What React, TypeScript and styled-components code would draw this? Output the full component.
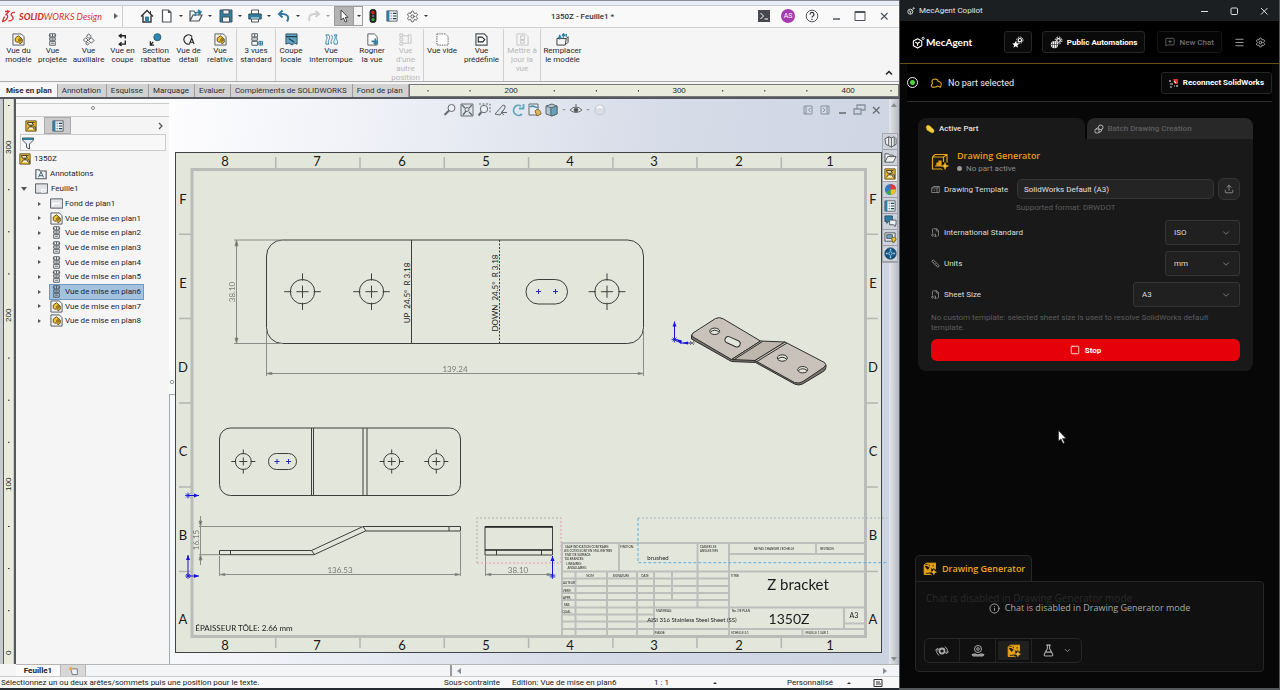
import React from "react";
import styled, { createGlobalStyle, css } from "styled-components";
import { Settings, MessageSquarePlus, Menu, Upload, ChevronDown, Info, FlaskConical, Ruler, Link2, Square, FileDigit } from "lucide-react";

const GlobalStyle = createGlobalStyle`
  * { box-sizing: border-box; }
  body { margin: 0; background: #000; font-family: Roboto, "Open Sans", sans-serif; font-size: 8px; color: #222; }
  button, input, select, textarea { font: inherit; color: inherit; margin: 0; padding: 0; }
  ul { list-style: none; margin: 0; padding: 0; }
  svg { flex: none; }
`;

/* ---------- shell ---------- */

const Desktop = styled.div`
  display: grid;
  grid-template-columns: minmax(0, 1fr) 381px;
  min-height: 100vh;
`;
const CadWindow = styled.main`
  display: flex;
  flex-direction: column;
  min-width: 0;
  background: #f5f5f5;
  border-top: 1px solid #8c8f96;
  border-bottom: 2px solid #262a31;
`;
const Icon = styled.svg<{ $s?: number }>`
  width: ${(p) => p.$s ?? 14}px;
  height: ${(p) => p.$s ?? 14}px;
  display: block;
  fill: none;
  stroke: #50555b;
  stroke-width: 1;
`;
const PlainButton = styled.button`
  border: 0;
  background: none;
  display: flex;
  align-items: center;
  justify-content: center;
`;

/* ---------- title bar ---------- */

const TitleBar = styled.header`
  display: flex;
  align-items: stretch;
  height: 27px;
  padding-top: 4px;
  background: linear-gradient(#e9eef6 0 4px, #c9ccd3 4px 5px, #f9f9f9 5px);
  border-bottom: 1px solid #d0d0d0;
`;
const Brand = styled.div`
  display: flex;
  align-items: center;
  width: 123px;
  gap: 3px;
  padding-left: 2px;
  color: #d4332f;
  font: italic 9px Lato, sans-serif;
  border-right: 1px solid #cfcfcf;
  b { font-weight: 900; }
  span { white-space: nowrap; }
`;
const BrandArrow = styled.svg`
  width: 4px;
  height: 6px;
  margin: 0 4px 0 auto;
  fill: #666;
`;
const QuickTools = styled.nav`
  display: flex;
  align-items: center;
  padding-left: 17px;
`;
const QuickButton = styled(PlainButton)<{ $w: number; $active?: boolean }>`
  width: ${(p) => p.$w}px;
  height: 20px;
  justify-content: flex-start;
  gap: 5px;
  ${(p) => p.$active && css`
    border: 1px solid #9b9b9b;
    gap: 6px;
    padding-left: 2px;
    margin-right: 3px;
    background: linear-gradient(90deg, #b3b3b3 0 18px, #999 18px 19px, #f5f5f5 19px);
  `}
`;
const Caret = styled.i<{ $dim?: boolean }>`
  border: 2px solid transparent;
  border-top-color: ${(p) => (p.$dim ? "#999" : "#333")};
  border-bottom: 0;
`;
const DocTitle = styled.h1`
  flex: 1;
  margin: 0;
  padding-right: 26px;
  text-align: center;
  align-self: center;
  font-size: 8px;
  font-weight: 500;
  color: #333;
`;
const WindowTools = styled.div`
  display: flex;
  align-items: center;
  gap: 10px;
  padding-right: 8px;
`;
const Avatar = styled.span`
  width: 14px;
  height: 14px;
  border-radius: 50%;
  background: #a63ab0;
  color: #fff;
  font-size: 7px;
  line-height: 14px;
  text-align: center;
`;

/* ---------- ribbon ---------- */

const Ribbon = styled.div`
  display: flex;
  height: 54px;
  padding: 1px 0 0 2px;
  border-bottom: 1px solid #aaa;
`;
const RibbonGroup = styled.div`
  display: flex;
  & + & { border-left: 1px solid #cfcfcf; }
`;
const RibbonButton = styled.button<{ $w: number }>`
  display: flex;
  flex-direction: column;
  align-items: center;
  width: ${(p) => p.$w}px;
  padding-top: 4px;
  border: 0;
  background: none;
  color: #262a33;
  line-height: 9px;
  white-space: nowrap;
  &:disabled { color: #b9b9b9; }
`;
const Collapse = styled(PlainButton)`
  margin: auto 5px 3px auto;
`;
const TabStrip = styled.div`
  display: flex;
  height: 17px;
  padding-top: 2px;
  border-bottom: 2px solid #55585e;
`;
const RibbonTab = styled.button<{ $active?: boolean }>`
  padding: 0 5px 0 ${(p) => (p.$active ? 6 : 4)}px;
  border: solid #9c9c9c;
  border-width: 0 1px 0 0;
  background: ${(p) => (p.$active ? "#f7f7f7" : "#d2d2d2")};
  color: #2a2d34;
  font-weight: ${(p) => (p.$active ? 700 : 400)};
  white-space: nowrap;
`;
const TopRuler = styled.svg`
  flex: 1;
  min-width: 0;
  height: 13px;
  background: #e9ecdd;
  outline: 1px solid #777;
  outline-offset: -1px;
  font: 8px "Liberation Sans", sans-serif;
  fill: #222;
`;

/* ---------- body ---------- */

const Workspace = styled.div`
  display: flex;
  flex: 1;
  min-height: 0;
`;
const SideRuler = styled.svg`
  width: 16px;
  height: 565px;
  font: 8px "Liberation Sans", sans-serif;
  fill: #222;
`;
const WorkColumn = styled.div`
  display: flex;
  flex-direction: column;
  flex: 1;
  min-width: 0;
`;
const ViewRow = styled.div`
  display: flex;
  flex: 1;
`;
const TreePane = styled.aside`
  width: 153px;
  flex: none;
  background: #f5f5f5;
`;
const Grip = styled.div`
  height: 18px;
  border-bottom: 1px solid #ccc;
  display: grid;
  place-items: center;
  background: linear-gradient(#fafafa 0 4px, #ccc 4px 5px, #f7f7f7 5px);
`;
const Knob = styled.i`
  width: 4px;
  height: 4px;
  border: 1px solid #888;
  border-radius: 50%;
`;
const PaneTabs = styled.div`
  display: flex;
  align-items: center;
  height: 17px;
  padding: 0 4px 0 1px;
`;
const PaneTab = styled(PlainButton)<{ $active?: boolean }>`
  width: 27px;
  height: 17px;
  background: ${(p) => (p.$active ? "#cbcbcd" : "transparent")};
  border: ${(p) => (p.$active ? "1px solid #aaa" : "0")};
`;
const PaneMore = styled(PlainButton)`
  margin-left: auto;
`;
const FilterBox = styled.label`
  display: flex;
  align-items: center;
  height: 17px;
  margin: 0 3px 0 4px;
  border: 1px solid #ccc;
  background: #f8f8f8;
  input { flex: 1; min-width: 0; border: 0; background: none; outline: 0; }
`;
const Tree = styled.ul`
  color: #24242c;
  white-space: nowrap;
`;
const TreeRow = styled.div<{ $pad: number }>`
  display: flex;
  align-items: center;
  height: 15px;
  padding-left: ${(p) => p.$pad}px;
  gap: 3px;
`;
const TreeLabel = styled.span<{ $selected?: boolean }>`
  display: flex;
  align-items: center;
  height: 14px;
  gap: 2px;
  padding: 0 2px 0 0;
  outline: ${(p) => (p.$selected ? "1px solid #6f9bc2" : "0")};
  background: ${(p) => (p.$selected ? "#a3c2e0" : "transparent")};
`;
const ViewList = styled.ul`
  display: flex;
  flex-direction: column;
  height: 132px;
  li { flex: 1; min-height: 0; }
`;
const Twist = styled.i<{ $open?: boolean }>`
  width: 0;
  margin-right: 6px;
  border: solid transparent;
  border-left-color: #555;
  transform: ${(p) => (p.$open ? "rotate(90deg)" : "none")};
  border-width: ${(p) => (p.$open ? "3px 0 3px 4px" : "2px 0 2px 3px")};
`;

/* ---------- canvas ---------- */

const Canvas = styled.section`
  position: relative;
  flex: 1;
  min-width: 0;
  background: linear-gradient(100deg, #fdfdfe 0, #eff1f7 25%, #d6dce8 60%, #ccd3e1 100%);
`;
const Sheet = styled.svg`
  display: block;
  width: 100%;
  height: auto;
  fill: none;
  stroke: #3c3f3a;
  stroke-width: 1;
  font-family: Lato, sans-serif;
  text { stroke: none; fill: #1b1b1b; text-anchor: middle; }
`;
const HeadsUp = styled.div`
  position: absolute;
  top: 4px;
  left: 274px;
  right: 16px;
  display: flex;
  align-items: center;
  gap: 3px;
  opacity: 0.85;
`;
const DocButtons = styled.div`
  display: flex;
  gap: 3px;
  margin-left: auto;
`;
const ScrollTrack = styled.div`
  position: absolute;
  inset: 0 0 0 auto;
  width: 10px;
  background: linear-gradient(90deg, #e4e6ea, #b5b8bf);
  display: flex;
  flex-direction: column;
  justify-content: space-between;
  align-items: center;
  padding: 4px 0 3px;
`;
const ScrollArrow = styled.i<{ $dir: "up" | "down" | "left" | "right" }>`
  border: 3px solid transparent;
  border-bottom: 4px solid #8a8d93;
  border-top: 0;
  transform: rotate(${(p) => ({ up: 0, right: 90, down: 180, left: 270 })[p.$dir]}deg);
`;
const TaskPane = styled.nav`
  position: absolute;
  top: 34px;
  right: 1px;
  width: 16px;
  display: grid;
  border: 1px solid #a5a8ae;
  background: #cfd3dc;
`;
const TaskButton = styled(PlainButton)<{ $active?: boolean }>`
  height: 16px;
  border-bottom: 1px solid #9b9ea6;
  background: ${(p) => (p.$active ? "#f4f4f4" : "#ced2da")};
`;

/* ---------- bottom bars ---------- */

const SheetTabs = styled.div`
  display: flex;
  height: 12px;
  background: #f3f4f6;
  border-top: 1px solid #b5b5b5;
`;
const SheetTab = styled.button<{ $active?: boolean }>`
  width: ${(p) => (p.$active ? 45 : 25)}px;
  border: 0;
  border-right: 1px solid #b5b5b5;
  background: ${(p) => (p.$active ? "#fafafa" : "#d7d7d7")};
  font-weight: 700;
  color: #222;
  display: grid;
  place-items: center;
`;
const SheetScroll = styled.div`
  display: flex;
  flex: 1;
  align-items: center;
  justify-content: space-between;
  margin-left: 364px;
  padding: 0 11px 0 4px;
  border-left: 2px solid #999;
`;
const StatusBar = styled.footer`
  display: grid;
  grid-template-columns: 443px 68px 142px 45px 1fr auto auto 10px;
  align-items: center;
  height: 12px;
  padding: 0 16px 0 1px;
  background: #f8f8f8;
  border-top: 1px solid #ccc;
  white-space: nowrap;
  color: #222;
`;
const UpCaret = styled.i`
  width: 4px;
  border: 2px solid transparent;
  border-top: 0;
  border-bottom-color: #333;
  margin: 0 22px 0 14px;
`;

/* ---------- copilot ---------- */

const Copilot = styled.aside`
  position: relative;
  display: flex;
  flex-direction: column;
  background: #070707;
  border: solid #55585a;
  border-width: 0 1px 2px 1px;
  color: #e6e6e6;
  font-size: 9px;
`;
const CopTitle = styled.div`
  display: flex;
  align-items: center;
  height: 21px;
  padding: 0 10px 0 7px;
  gap: 4px;
  background: #1b1f22;
  font-size: 8px;
`;
const CopWindowButtons = styled.div`
  display: flex;
  gap: 20px;
  margin-left: auto;
`;
const CopHeader = styled.header`
  display: flex;
  align-items: center;
  height: 43px;
  padding: 0 13px 0 12px;
  background: #000;
  border-bottom: 1px solid #68501a;
`;
const CopLogo = styled.div`
  display: flex;
  align-items: center;
  gap: 1px;
  margin-right: auto;
  color: #fff;
  font: 700 10px Lato, sans-serif;
`;
const CopButton = styled.button<{ $ml?: number }>`
  display: flex;
  align-items: center;
  justify-content: center;
  gap: 4px;
  height: 22px;
  padding: 0 7px;
  margin-left: ${(p) => p.$ml ?? 0}px;
  border: 1px solid #262626;
  border-radius: 3px;
  background: #0a0a0a;
  color: #fff;
  font-size: 8px;
  font-weight: 700;
  white-space: nowrap;
  &:disabled { color: #6f6f6f; font-weight: 500; border-color: #161616; background: #050505; }
`;
const BareButton = styled(PlainButton)<{ $ml: number }>`
  margin-left: ${(p) => p.$ml}px;
  color: #aaa;
`;
const CopStatus = styled.div`
  display: flex;
  align-items: center;
  height: 38px;
  margin: 0 7px;
  border-bottom: 1px solid #2c2c2c;
  background: #000;
  color: #f0f0f0;
  > span { margin: 0 auto 0 6px; }
`;
const OnlineDot = styled.i`
  width: 11px;
  height: 11px;
  margin-right: 12px;
  border: 1px solid #f4f4f4;
  border-radius: 50%;
  background: radial-gradient(#4bd337 0 2px, #000 3px);
`;
const Card = styled.section`
  margin: 16px 26px 0 18px;
  border-radius: 8px;
  background: #191919;
`;
const CardTabs = styled.div`
  display: flex;
  gap: 2px;
  height: 21px;
  background: #070707;
`;
const CardTab = styled.button<{ $active?: boolean }>`
  display: flex;
  align-items: center;
  flex: 1;
  gap: 4px;
  padding-left: 7px;
  border: 0;
  border-radius: 8px 8px 0 0;
  background: ${(p) => (p.$active ? "#191919" : "#282828")};
  color: ${(p) => (p.$active ? "#e2e2e2" : "#5f5f5f")};
  font-size: 8px;
  font-weight: 500;
`;
const CardBody = styled.div`
  display: flex;
  flex-direction: column;
  padding: 10px 13px;
  color: #d2d2d2;
  font-size: 8px;
`;
const GeneratorHead = styled.div`
  display: grid;
  grid-template-columns: 18px 1fr;
  column-gap: 8px;
  align-items: center;
  height: 26px;
  h2 { margin: 0; font: 600 9px/13px "Open Sans", sans-serif; color: #e99a12; }
  p { margin: 0; line-height: 13px; color: #8d8d8d; display: flex; align-items: center; gap: 4px; }
`;
const GrayDot = styled.i`
  width: 5px;
  height: 5px;
  border-radius: 50%;
  background: #9a9a9a;
`;
const TemplateRow = styled.div`
  display: flex;
  align-items: center;
  gap: 4px;
  margin-top: 3px;
  input {
    flex: 1;
    min-width: 0;
    height: 20px;
    padding: 0 6px;
    border: 1px solid #353535;
    border-radius: 5px;
    background: #242424;
    color: #e0e0e0;
  }
`;
const FieldLabel = styled.label`
  display: flex;
  align-items: center;
  width: 82px;
  gap: 4px;
  white-space: nowrap;
  color: #dcdcdc;
`;
const UploadButton = styled.button`
  width: 22px;
  height: 22px;
  border: 1px solid #353535;
  border-radius: 6px;
  background: #242424;
  color: #999;
  display: grid;
  place-items: center;
`;
const Hint = styled.p<{ $indent?: boolean }>`
  margin: ${(p) => (p.$indent ? "3px 0 7px 85px" : "6px 0 6px")};
  line-height: 10px;
  color: #5c5c5c;
`;
const OptionRow = styled.div`
  display: flex;
  justify-content: space-between;
  & + & { margin-top: 6px; }
`;
const SelectBox = styled.span<{ $w: number }>`
  display: grid;
  width: ${(p) => p.$w}px;
  height: 25px;
  align-items: center;
  > * { grid-area: 1 / 1; }
  select {
    appearance: none;
    height: 25px;
    padding: 0 8px;
    border: 1px solid #353535;
    border-radius: 3px;
    background: #202020;
    color: #dcdcdc;
  }
  svg { justify-self: end; margin-right: 9px; color: #888; pointer-events: none; }
`;
const StopButton = styled.button`
  display: flex;
  align-items: center;
  justify-content: center;
  gap: 5px;
  height: 22px;
  border: 0;
  border-radius: 6px;
  background: #e60009;
  color: #fff;
  font-weight: 700;
`;
const ChatArea = styled.section`
  margin: auto 15px 16px 15px;
  font-family: "Open Sans", sans-serif;
`;
const ModeTab = styled.div`
  display: flex;
  align-items: center;
  gap: 5px;
  width: 117px;
  height: 26px;
  padding-left: 7px;
  border: 1px solid #262626;
  border-bottom: 0;
  border-radius: 5px 5px 0 0;
  background: #101010;
  color: #eda61c;
  font-weight: 600;
`;
const ChatBox = styled.div`
  position: relative;
  height: 91px;
  padding: 9px 8px 8px;
  border: 1px solid #262626;
  border-radius: 0 4px 4px 4px;
  background: #101010;
  display: flex;
  flex-direction: column;
  justify-content: space-between;
  textarea {
    height: 34px;
    padding: 0 2px;
    border: 0;
    background: none;
    resize: none;
    font-size: 10px;
    line-height: 14px;
    &::placeholder { color: #2a2a2a; opacity: 1; }
  }
`;
const ChatNotice = styled.p`
  position: absolute;
  inset: 19px 0 auto;
  display: flex;
  justify-content: center;
  align-items: center;
  gap: 5px;
  margin: 0;
  line-height: 14px;
  color: #a8a8a8;
`;
const ModeBar = styled.div`
  display: flex;
  align-self: flex-start;
  height: 25px;
  border: 1px solid #272727;
  border-radius: 5px;
`;
const ModeButton = styled(PlainButton)<{ $w: number; $active?: boolean }>`
  width: ${(p) => p.$w}px;
  gap: 8px;
  color: #a9a9a9;
  border-right: 1px solid #222;
  background: ${(p) => (p.$active ? "#1f1f1f" : "transparent")};
  background-clip: content-box;
  padding: 2px;
  &:last-child { border: 0; }
`;
const Pointer = styled.svg`
  position: absolute;
  left: 158px;
  top: 430px;
  width: 9px;
  height: 14px;
`;

/* ---------- small drawings ---------- */

const blue = "#2f7fa3";

const PartGlyph = ({ s = 13, frame = true }: { s?: number; frame?: boolean }) => (
  <Icon $s={s} viewBox="0 0 14 14">
    {frame && <path d="M1 1h9l3 3v9H1z" fill="#f3f3f3" />}
    <path d="M3.500 5.500 7 3l4 3.500V10l-2.500 1.500L7 9.500l-2 .5-1.500-1.500z" fill="#f2c230" stroke="#5c4a10" />
    <circle cx="8.500" cy="7.500" r="1.300" stroke="#5c4a10" />
  </Icon>
);
const ViewsGlyph = ({ s = 13 }: { s?: number }) => (
  <Icon $s={s} viewBox="0 0 14 14">
    <path d="M4 .8h6v3.400H4zM4 5.200h6v2.600H4zM4 9h6v4.200H4zM7 1v3M3 2.500h2M9 2.500h2M6 6.500h2M5.500 11h3" />
  </Icon>
);
const DrawGlyph = ({ s = 12 }: { s?: number }) => (
  <Icon $s={s} viewBox="0 0 14 14">
    <path d="M1 1h12v12H1z" fill="#e9b92c" stroke="#554820" />
    <path d="M3 3h5l2 3H4zM8 3h3M3 11l2-3h4l2 3M7 6v2M10 8h2v4" stroke="#2f2a1c" fill="#f7efcf" />
  </Icon>
);
const ListGlyph = ({ s = 12 }: { s?: number }) => (
  <Icon $s={s} viewBox="0 0 14 14">
    <path d="M1 1h12v12H1z" fill="#f4f8fa" />
    <path d="M1 1h3v12H1z" fill={blue} stroke="none" />
    <path d="M5.500 4h1M8 4h4M5.500 7h1M8 7h4M5.500 10h1M8 10h4" stroke="#245" strokeWidth="1.400" />
  </Icon>
);
const MinGlyph = () => <Icon viewBox="0 0 14 14"><path d="M4 10h7" strokeWidth="1.500" /></Icon>;
const CloseGlyph = () => <Icon viewBox="0 0 14 14"><path d="m4 4 6.500 6.500M10.500 4 4 10.500" strokeWidth="1.200" /></Icon>;

const HomeIcon = () => (
  <Icon viewBox="0 0 14 14"><path d="M1 7.500 7 1.500l6 6M3 6.500V13h8V6.500" stroke="#333" strokeWidth="1.400" /><path d="M5.500 13V8h3v5" fill={blue} stroke={blue} /><path d="M10.500 2v3" stroke="#333" /></Icon>
);
const NewIcon = () => <Icon viewBox="0 0 14 14"><path d="M2.500 1h6L11 3.500V13H2.500zM8.500 1v2.500H11" fill="#fff" strokeWidth="1.200" /></Icon>;
const OpenIcon = () => (
  <Icon viewBox="0 0 14 14"><path d="M1 12V2h4l1 1.500h5V6M1 12l3-6h9l-3 6z" fill="#eef3f6" strokeWidth="1.200" /><path d="M6 7c0-3 2-4 4-4M9 1l3 2-3 2.500" stroke={blue} strokeWidth="1.600" /></Icon>
);
const SaveIcon = () => (
  <Icon viewBox="0 0 14 14"><path d="M1 1h12v12H1z" fill={blue} stroke="#32586c" /><path d="M4 1h6v4H4zM3.500 8h7v5h-7z" fill="#f2f2f2" stroke="#44525a" /></Icon>
);
const PrintIcon = () => (
  <Icon viewBox="0 0 14 14"><path d="M3.500 1h7v4h-7zM3.500 9.500h7V13h-7z" fill="#fff" /><path d="M.8 5h12.400v5H.8z" fill={blue} stroke="#34505e" /><path d="M3 9h8" stroke="#eee" /></Icon>
);
const UndoIcon = ({ dim }: { dim?: boolean }) => (
  <Icon viewBox="0 0 14 14">
    <path d={dim ? "M2.500 12c-1-4 0-7 5-7H11M8.500 2 12 5 8.500 8" : "M10 12.500c3-4.500 0-7.500-4-7.500H3M5.500 1.500 2 5l3.500 3.500"} stroke={dim ? "#d0d0d0" : "#3879a0"} strokeWidth="2" />
  </Icon>
);
const CursorIcon = () => <Icon viewBox="0 0 14 14"><path d="M4 1v10l2.400-2 1.800 4 1.800-.8-1.800-3.800H11z" fill="#fff" stroke="#444" /></Icon>;
const LightIcon = () => (
  <Icon viewBox="0 0 14 14"><rect x="4" y=".5" width="6" height="13" rx="2.500" fill="#222" stroke="#222" /><circle cx="7" cy="3.500" r="1.700" fill="#e02020" stroke="none" /><circle cx="7" cy="7" r="1.300" fill="#666" stroke="none" /><circle cx="7" cy="10.500" r="1.600" fill="#30b040" stroke="none" /></Icon>
);

const RibbonIcons: Record<string, React.ReactNode> = {
  model: <PartGlyph />,
  projected: <ViewsGlyph />,
  auxiliary: <Icon $s={13} viewBox="0 0 14 14"><path d="m7 1 3 2.500L7.500 6 5 3.500zM4 5l2.500 2.500L4 10 1.500 7.500zM10 5l3 3-3 3-3-3zM6 10l1.500 1.500L6 13l-2-1.500z" /></Icon>,
  section: <Icon $s={13} viewBox="0 0 14 14"><path d="M4 3h6v3M10 8v4H4M6 1 3.500 3 6 5M6 10l-2.500 2L6 14" stroke="#222" strokeWidth="1.500" /></Icon>,
  removed: <Icon $s={13} viewBox="0 0 14 14"><circle cx="9" cy="4.500" r="3.800" fill="#2f87b0" stroke="#205a78" /><path d="M4.500 9.500 2 12.500M1.500 9v4h4" stroke="#222" strokeWidth="1.400" /></Icon>,
  detail: <Icon $s={13} viewBox="0 0 14 14"><path d="M11 4a5 5 0 1 0-3 8M8 12l2.500-6.500L13 12M9 10h3" stroke="#222" strokeWidth="1.200" /></Icon>,
  relative: <PartGlyph />,
  standard: <Icon $s={13} viewBox="0 0 14 14"><path d="M2 .8h6v3.400H2zM2 5.200h6v2.600H2zM2 9h6v4.200H2zM5 1v3" /><path d="M9.500 9h4v4h-4zM9.500 11h4M11.500 9v4" stroke={blue} /></Icon>,
  broken: <Icon $s={13} viewBox="0 0 14 14"><path d="M1 1h12v11l-3-1-2 2-4-2-3 1z" fill="#5ea4c2" stroke="#34505e" /><path d="M1 4h12M4 6l6 4" stroke="#24404e" strokeWidth="1.400" /></Icon>,
  interrupted: <Icon $s={13} viewBox="0 0 14 14"><path d="M1 2h3c3 4-2 6 0 10H1C0 8 4 6 1 2zM10 2h3c-3 4 2 6 0 10h-3c-2-4 3-6 0-10zM7 2c3 4-2 6 0 10" stroke={blue} /></Icon>,
  crop: <Icon $s={13} viewBox="0 0 14 14"><path d="M2 1h7l3 3v9H2z" fill="#fff" /><path d="M6 9h7M10 6v7M8 11h5" stroke={blue} strokeWidth="1.700" /></Icon>,
  alternate: <Icon $s={13} viewBox="0 0 14 14" style={{ stroke: "#c4c4c4" }}><path d="M1 1h3v3H1zM1 10h3v3H1zM10 2h3v9h-3zM1 5.500h3v3H1zM4 3h6M4 11h6" /></Icon>,
  empty: <Icon $s={13} viewBox="0 0 14 14"><path d="M1 1h9l3 3v9H1z" strokeDasharray="1.500 1" fill="#fff" /></Icon>,
  predefined: <Icon $s={13} viewBox="0 0 14 14"><path d="M1 1h9l3 3v9H1z" fill="#fff" strokeWidth="1.300" /><path d="M3.500 9.500V4.500h4l3 2.500-2 2.500z" stroke="#222" strokeWidth="1.200" /></Icon>,
  update: <Icon $s={13} viewBox="0 0 14 14" style={{ stroke: "#c4c4c4" }}><path d="M1 1h9l3 3v9H1zM5 3h4v4H5zM5 8h4v3H5z" /></Icon>,
  replace: <Icon $s={13} viewBox="0 0 14 14"><path d="M1 6h10l-1 7H1zM11 6l2-2v6l-2 2" fill="#f4f4f4" stroke="#333" /><path d="M4 6V2M2.500 4 4 6l1.500-2M8 1v4M6.500 3 8 1l1.500 2M11 1v3" stroke={blue} strokeWidth="1.600" /></Icon>,
};

type Tool = [string, string[], number, boolean?];
const ribbon: Tool[][] = [
  [["model", ["Vue du", "modèle"], 33], ["projected", ["Vue", "projetée"], 35], ["auxiliary", ["Vue", "auxiliaire"], 37], ["section", ["Vue en", "coupe"], 31], ["removed", ["Section", "rabattue"], 35], ["detail", ["Vue de", "détail"], 31], ["relative", ["Vue", "relative"], 32]],
  [["standard", ["3 vues", "standard"], 38]],
  [["broken", ["Coupe", "locale"], 30], ["interrupted", ["Vue", "interrompue"], 50], ["crop", ["Rogner", "la vue"], 32], ["alternate", ["Vue", "d'une", "autre", "position"], 35, true]],
  [["empty", ["Vue vide"], 36], ["predefined", ["Vue", "prédéfinie"], 43]],
  [["update", ["Mettre à", "jour la", "vue"], 36, true]],
  [["replace", ["Remplacer", "le modèle"], 43]],
];
const ribbonTabs = ["Mise en plan", "Annotation", "Esquisse", "Marquage", "Evaluer", "Compléments de SOLIDWORKS", "Fond de plan"];

const GeneratorIcon = ({ s = 18, solid }: { s?: number; solid?: boolean }) => (
  <Icon $s={s} viewBox="0 0 18 18" style={{ stroke: "#e8a317", strokeWidth: 1.2 }}>
    <path d="M4 1.500h12v8M1.500 4v12h8M1.500 4 4 1.500M1.500 4h11v5M12.500 4 16 1.500" fill={solid ? "#e8a317" : "none"} />
    <path d="M4 13h2v-3h2V8h2v5z" fill="#e8a317" />
    {solid && <path d="M3 6h3M8 3.500v2M12 5h2M3.500 14.500h5" stroke="#241a05" />}
    <path d="m14 9.500 1 2.500 2.500 1-2.500 1-1 2.500-1-2.500-2.500-1 2.500-1zM9.500 15l.6 1.400 1.400.6" fill="#f3bd3a" stroke="#e8a317" strokeWidth=".6" />
  </Icon>
);
const GearDots = ({ s = 14, star }: { s?: number; star?: boolean }) => (
  <Icon $s={s} viewBox="0 0 16 16" style={{ stroke: "#fff" }}>
    <circle cx="10.500" cy="5.500" r="2.200" strokeWidth="1.500" />
    <circle cx="10.500" cy="5.500" r="4.200" strokeDasharray="2 1.300" strokeWidth="1.200" />
    {star
      ? <path d="m5 6.500 1.400 3.100 3.300.3-2.500 2.300.8 3.300L5 13.800 2 15.500l.8-3.300L.3 9.900l3.300-.3z" fill="#fff" stroke="none" />
      : <><circle cx="5.500" cy="10.500" r="4.500" fill="#fff" stroke="none" /><path d="M1 10.500h9M5.500 6v9M3.500 7c-1 2-1 5 0 7M7.500 7c1 2 1 5 0 7" stroke="#111" strokeWidth=".7" /></>}
  </Icon>
);

/* ---------- the drawing sheet ---------- */

const Target = ({ x, y, r }: { x: number; y: number; r: number }) => {
  const a = r * 0.5, b = r * 0.9, c = r * 1.5;
  return (
    <g>
      <circle cx={x} cy={y} r={r} />
      <path d={`M${x - a} ${y}h${2 * a}M${x} ${y - a}v${2 * a}M${x - c} ${y}h${c - b}M${x + b} ${y}h${c - b}M${x} ${y - c}v${c - b}M${x} ${y + b}v${c - b}`} />
    </g>
  );
};
const Plus = ({ x, y }: { x: number; y: number }) => <path d={`M${x - 2.5} ${y}h5M${x} ${y - 2.5}v5`} stroke="#2a2ab8" />;
const Origin = ({ x, y, up, right }: { x: number; y: number; up?: number; right?: number }) => (
  <g stroke="#1414d8" fill="#1414d8">
    <path d={`M${x - 3} ${y}h6M${x} ${y - 3}v6M${x - 2} ${y - 2}l4 4M${x + 2} ${y - 2}l-4 4`} strokeWidth=".8" />
    {up && <><path d={`M${x} ${y}V${y - up}`} /><path d={`M${x - 2} ${y - up + 5}h4L${x} ${y - up}z`} stroke="none" /></>}
    {right && <><path d={`M${x} ${y}h${right}`} /><path d={`M${x + right - 5} ${y - 2}v4l5-2z`} stroke="none" /></>}
  </g>
);
const cols: [number, string][] = [[225, "8"], [317, "7"], [402, "6"], [486, "5"], [570, "4"], [654, "3"], [739, "2"], [830, "1"]];
const rows: [number, string][] = [[199, "F"], [283, "E"], [367, "D"], [451, "C"], [535, "B"], [619, "A"]];
const blockNotes: [number, number, string][] = [
  [587, 547.5, "SAUF INDICATION CONTRAIRE:"], [588, 552, "LES COTES SONT EN MILLIMETRES"], [578, 556, "ETAT DE SURFACE:"], [574, 560, "TOLERANCES:"],
  [574, 564.5, "LINEAIRES:"], [577, 569, "ANGULAIRES:"], [627, 547.5, "FINITION:"], [708, 547.5, "CASSER LES"], [709, 552, "ANGLES VIFS"],
  [774, 550, "NE PAS CHANGER L'ECHELLE"], [827, 550, "REVISION"], [590, 577, "NOM"], [621, 577, "SIGNATURE"], [645, 577, "DATE"],
  [569, 584, "AUTEUR"], [567, 591.5, "VERIF."], [567, 598.5, "APPR."], [567, 605.5, "FAB."], [567, 613, "QUAL."], [664, 611.5, "MATERIAU:"],
  [735, 577, "TITRE:"], [741, 611.5, "No. DE PLAN"], [660, 633.5, "MASSE:"], [740, 633.5, "ECHELLE:1:1"], [817, 633.5, "FEUILLE 1 SUR 1"],
];

const DrawingSheet = () => (
  <Sheet viewBox="169 99 730 565" role="img" aria-label="Z bracket">
    <path d="M169 99h6v271h-6z" fill="#fdfdfd" stroke="none" />
    <path d="M169 394.500h6M169.500 394v270" stroke="#a5a8ae" />
    <circle cx="172" cy="382" r="1.700" stroke="#999" />
    <rect x="175.500" y="152.500" width="706" height="500" fill="#e3e6da" stroke="#404347" />
    <rect x="192" y="169.500" width="673.500" height="467" stroke="#b9bcb8" strokeWidth="3" />
    <g stroke="#b4b7b1" strokeWidth="1.500">
      {[275.7, 360, 444.3, 528.6, 612.9, 697, 781.3].map((x) => <path key={x} d={`M${x} 157v11M${x} 638v10`} />)}
      {[234.3, 318.6, 402.9, 487, 571.4].map((y) => <path key={y} d={`M179 ${y}h12M867 ${y}h11`} />)}
    </g>
    <g fontSize="13">
      {cols.map(([x, t]) => <React.Fragment key={t}><text x={x} y="166">{t}</text><text x={x} y="650">{t}</text></React.Fragment>)}
      {rows.map(([y, t]) => <React.Fragment key={t}><text x="183" y={y + 4.5}>{t}</text><text x="873" y={y + 4.5}>{t}</text></React.Fragment>)}
    </g>

    {/* flat pattern */}
    <rect x="266.500" y="240" width="377" height="103.500" rx="16" />
    <path d="M411.500 240v103" />
    <path d="M499.500 240v103" strokeDasharray="2 1.500" />
    <Target x={302.5} y={291.7} r={12.2} />
    <Target x={371.5} y={291.7} r={12.2} />
    <Target x={607} y={291.7} r={12.2} />
    <rect x="526" y="279.500" width="41.500" height="24.500" rx="12.200" />
    <Plus x={538.5} y={291.5} />
    <Plus x={555.5} y={291.5} />
    <g stroke="#8b8e88">
      <path d="M234 240h48M234 343.500h48M236.500 240v103M266.500 330v46M643.500 330v46M266.500 373.500h377" />
      <path d="m235 246 1.500-6 1.500 6zM235 338l1.500 5 1.500-5zM272 372.500l-6 1 6 1zM638 372.500l5 1-5 1z" fill="#666" />
    </g>
    <g fontSize="8">
      <text transform="translate(410 293) rotate(-90)">UP&nbsp; 24.5° &nbsp;R 3.18</text>
      <text transform="translate(498 293) rotate(-90)">DOWN&nbsp; 24.5° &nbsp;R 3.18</text>
      <g opacity=".55">
        <text transform="translate(235 292) rotate(-90)">38.10</text>
        <text x="455" y="372">139.24</text>
        <text transform="translate(199 540) rotate(-90)">16.15</text>
        <text x="340" y="573">136.53</text>
        <text x="518" y="573">38.10</text>
      </g>
      <text x="244" y="631">ÉPAISSEUR TÔLE: 2.66 mm</text>
    </g>

    {/* top view */}
    <rect x="219.500" y="428" width="241" height="67.500" rx="11" />
    <path d="M311.500 428v67M313.500 428v67M363 428v67M367 428v67" />
    <Target x={243.3} y={461.5} r={8} />
    <Target x={391.7} y={461.5} r={8} />
    <Target x={436.3} y={461.5} r={8} />
    <rect x="268.500" y="453.500" width="28" height="16" rx="8" />
    <Plus x={277} y={461.5} />
    <Plus x={288.5} y={461.5} />

    {/* side view */}
    <path d="M219.500 550.500h92l51.500-24h97.500v4.500h-95l-51.500 23.700h-94.500zM230.500 550.500v4M449 526.500v4.500M311.500 550.500l3 4M363 526.500l3 4.500" />
    <g stroke="#8b8e88">
      <path d="M199 526.500h164M199 554.700h20M200.500 516v49M219.500 556v20M460.500 532v44M219.500 574.500h241M485.500 556v20M552.500 556v20M485.500 574.500h67" />
      <path d="M199 521l1.500 5 1.500-5zM199 560l1.500-5 1.500 5zM225 573.500l-5 1 5 1zM455 573.500l5 1-5 1zM491 573.500l-5 1 5 1zM547 573.500l5 1-5 1z" fill="#666" />
    </g>

    {/* end view */}
    <path d="M485 526.500h67.500V555H485zM496.500 550v5M541.500 550v5" />
    <path d="M485 527h67.500M485 550h67.500" stroke="#222" strokeWidth="1.600" />
    <path d="M477 563v-45h84" stroke="#aeb0aa" strokeDasharray="2 2" />
    <path d="M477 563h84v-45" stroke="#e69ab2" strokeDasharray="2 2" />
    <path d="M638 518h249" stroke="#a6b4b8" strokeDasharray="2 2" />

    <Origin x={188} y={495.5} right={11} />
    <Origin x={188} y={576} right={11} up={21} />
    <Origin x={552.5} y={576} up={20} />
    <Origin x={674.5} y={339.5} up={18} />
    <path d="m675 340 6 3h11" stroke="#1414d8" />
    <path d="m676 339 6 1.500-1 3.500zM688 341.500v3l-6-1.500z" fill="#1414d8" stroke="none" />
    <path d="m690 341 4 4M694 341l-4 4M689 343h6" stroke="#777" />

    {/* isometric view */}
    <g fill="#c9c2ba" stroke="#2e2e2c" strokeLinejoin="round">
      <path d="M691.500 335v4l40 22.500 24 1 39 21.500q4 2 8 0l20-12q4-2 3.500-7l-71-4-63-26z" fill="#77726c" />
      <path d="M693 333q-2.500 2 0 4l38.500 22.500 29-18.500-37-22q-4-2.500-8-.5z" />
      <path d="m731.500 359.500 29-18.500 24.500 1-30 18.500z" fill="#bdb6ac" />
      <path d="m755 360.500 30-18.500 39.500 20.500q2.500 2 0 4.500l-21.500 14.500q-4 2.500-8.500 1z" />
      <path d="m757 361.500 30-18.500M733.500 360l29-18.500" />
      <g fill="#e3e6da">
        <ellipse cx="714.700" cy="331.300" rx="5" ry="3.200" />
        <rect x="724.500" y="338.500" width="16" height="6.500" rx="3.250" transform="rotate(24 732.500 342)" />
        <ellipse cx="782.300" cy="358" rx="5" ry="3.200" />
        <ellipse cx="802.700" cy="369.700" rx="5" ry="3.200" />
      </g>
      <path d="M710.500 332q4-3.500 8.500 0M778 359q4-3.500 8.500 0M798.500 370.500q4-3.500 8.500 0" fill="none" />
    </g>

    {/* title block */}
    <path
      stroke="#bcbfbb"
      strokeWidth="2"
      d="M562 636v-93h303M562 571.500h303M619 543v28M697.500 543v64M729 543v93M729 554h136M816 543v11M729 607.500h136M654 629h211M844 607v22M844 623.500h21M802.500 629v7M562 578.500h167M562 586h167M562 593h167M562 600h167M562 607.500h167M562 614.500h92M562 621.500h92M562 629h92M575.500 571v65M607 571v65M637 571v65M654 571v65M672 571v29"
    />
    <path d="M638 518v44.700h249" stroke="#5db0e4" strokeDasharray="3 2" />
    <g fontSize="15">
      <text x="798" y="590">Z bracket</text>
    </g>
    <g fontSize="14">
      <text x="789" y="624">1350Z</text>
    </g>
    <g fontSize="6">
      <text x="658" y="560">brushed</text>
      <text x="692" y="622">AISI 316 Stainless Steel Sheet (SS)</text>
    </g>
    <g fontSize="7">
      <text x="854" y="618">A3</text>
    </g>
    <g fontSize="3">
      {blockNotes.map(([x, y, t]) => <text key={t} x={x} y={y}>{t}</text>)}
    </g>
  </Sheet>
);

/* ---------- app ---------- */

const g = "#7b8794";
const headsUpIcons: React.ReactNode[] = [
  <Icon viewBox="0 0 14 14"><circle cx="8.500" cy="5" r="3.500" fill="#e9f1f5" /><path d="M6 7.500 1.500 12" strokeWidth="2" /></Icon>,
  <Icon viewBox="0 0 14 14"><path d="M1 1h12v12H1z" fill="#dde6ec" /><path d="m2 2 3 3M12 2 9 5M12 12 9 9M3 12l3-4" strokeWidth="1.400" /><circle cx="7" cy="6.500" r="2" /></Icon>,
  <Icon viewBox="0 0 14 14"><path d="M2 1h11v10" strokeDasharray="2 1.500" /><circle cx="7" cy="6" r="3.700" fill="#e9f1f5" /><path d="M4.500 9 1.500 12.500" strokeWidth="2" /></Icon>,
  <Icon viewBox="0 0 14 14"><path d="m1 11 8-9q3 0 2 3l-5 7zM7 9.500h6M10 7l-3 2.500 3 2.500" fill="#dfe7ee" /></Icon>,
  <Icon viewBox="0 0 14 14"><path d="M11 11A5 5 0 1 1 10 3M12.500 1v4.500H8" stroke="#4b9cb8" strokeWidth="1.800" /></Icon>,
  <Icon viewBox="0 0 14 14"><path d="M1 1h9v11H1z" fill="#e9eef2" /><path d="M2 4c4-3 6 2 8 0" stroke={blue} strokeWidth="1.500" /><path d="M7 8c2-3 6-1 6 3l-4 2z" fill="#e2b040" stroke="#6b5523" /></Icon>,
  <Icon viewBox="0 0 14 14"><path d="m1 3 6-2 5 2v8l-5 2-6-2z" fill="#9fc4d2" /><path d="m1 3 5 2v8M6 5l6-2" /><path d="m6 5 6-2v8l-6 2z" fill="#4f98b1" /></Icon>,
];
const taskIcons: [string, React.ReactNode][] = [
  ["Ressources", <Icon $s={13} viewBox="0 0 14 14"><path d="m1 4 4-2 3 1 3-1 2 2v6l-5 3-6-3zM5 2v9M8 3v10M11 3v8" fill="#eee" /></Icon>],
  ["Bibliothèque", <Icon $s={13} viewBox="0 0 14 14"><path d="M1 12V3h4l1 1.500h4V6M1 12l3-6h9l-3 6z" fill="#f1f1f1" /></Icon>],
  ["Palette de vues", <DrawGlyph />],
  ["Apparences", <Icon $s={13} viewBox="0 0 14 14"><g stroke="none"><circle cx="7" cy="7" r="6" fill="#3478c8" /><path d="M7 7V1a6 6 0 0 1 6 6z" fill="#e33" /><path d="M7 7h6a6 6 0 0 1-6 6z" fill="#ecc12c" /><path d="M7 7v6a6 6 0 0 1-5-3z" fill="#3aa94a" /></g></Icon>],
  ["Propriétés", <ListGlyph />],
  ["Forum", <Icon $s={13} viewBox="0 0 14 14"><path d="M1 1h8v6H5L3 9V7H1z" fill={blue} stroke="#214f68" /><path d="M6 5.500h7v5h-1v2l-2-2H6z" fill="#e8f0f4" /></Icon>],
  ["Vérification", <Icon $s={13} viewBox="0 0 14 14"><path d="M1 2h11v9H1z" fill="#dfe8ec" /><path d="M3 4h6v4H3z" fill="#6aa5bd" /><path d="M8 8q4-3 5 1l-3 4z" fill="#f0bd35" stroke="#7a5e16" /></Icon>],
  ["Communauté", <Icon $s={13} viewBox="0 0 14 14"><circle cx="7" cy="7" r="6" fill="#15547f" stroke="#0d3957" /><path d="M7 2v2M7 10v2M2 7h2M10 7h2" stroke="#9ed1f0" strokeWidth="1.500" /><circle cx="7" cy="7" r="1.800" stroke="#9ed1f0" /></Icon>],
];
const range = (n: number) => Array.from({ length: n }, (_, i) => i);
const sideMarks: [number, string][] = [[154, "300"], [322, "200"], [491, "100"], [655, "0"]];

export default function App() {
  return (
    <>
      <GlobalStyle />
      <Desktop>
        <CadWindow>
          <TitleBar>
            <Brand>
              <svg width="14" height="14" viewBox="0 0 14 14" fill="none" stroke="#d4332f" strokeWidth="1.300" aria-hidden="true">
                <path d="M3 2.500h4L4 5.500c3 0 2 6-3.500 7l2-5M13 3.500c-3-.5-5 1.500-3 3.500s1 5-3.500 5M5 1.500l2.500 1" />
              </svg>
              <span><b>SOLID</b>WORKS Design</span>
              <BrandArrow viewBox="0 0 4 6"><path d="m0 0 4 3-4 3z" /></BrandArrow>
            </Brand>
            <QuickTools>
              <QuickButton $w={20} aria-label="Accueil"><HomeIcon /></QuickButton>
              <QuickButton $w={29} aria-label="Nouveau"><NewIcon /><Caret /></QuickButton>
              <QuickButton $w={30} aria-label="Ouvrir"><OpenIcon /><Caret /></QuickButton>
              <QuickButton $w={29} aria-label="Enregistrer"><SaveIcon /><Caret /></QuickButton>
              <QuickButton $w={29} aria-label="Imprimer"><PrintIcon /><Caret /></QuickButton>
              <QuickButton $w={30} aria-label="Annuler"><UndoIcon /><Caret /></QuickButton>
              <QuickButton $w={27} aria-label="Rétablir"><UndoIcon dim /><Caret $dim /></QuickButton>
              <QuickButton $w={29} $active aria-label="Sélectionner"><CursorIcon /><Caret /></QuickButton>
              <QuickButton $w={20} aria-label="Reconstruire"><LightIcon /></QuickButton>
              <QuickButton $w={20} aria-label="Propriétés"><ListGlyph /></QuickButton>
              <QuickButton $w={28} aria-label="Options"><Settings size={13} color="#555" strokeWidth={1.8} /><Caret /></QuickButton>
            </QuickTools>
            <DocTitle>1350Z - Feuille1 *</DocTitle>
            <WindowTools>
              <PlainButton aria-label="Console">
                <Icon viewBox="0 0 14 14"><path d="M1 1h12v12H1z" fill="#46494d" stroke="none" /><path d="m3.500 4 3 3-3 3M7.500 10h3.500" stroke="#fff" /></Icon>
              </PlainButton>
              <Avatar>AS</Avatar>
              <PlainButton aria-label="Aide">
                <Icon viewBox="0 0 14 14"><circle cx="7" cy="7" r="5.800" /><path d="M5 5.500c0-3 4-2.500 4 0 0 1.500-2 1.500-2 3M7 9.700v1.200" stroke="#333" strokeWidth="1.200" /></Icon>
              </PlainButton>
              <PlainButton aria-label="Réduire"><MinGlyph /></PlainButton>
              <PlainButton aria-label="Agrandir"><Icon viewBox="0 0 14 14"><path d="M2 2.500h10v9H2z" /><path d="M2 3h10" strokeWidth="2" /></Icon></PlainButton>
              <PlainButton aria-label="Fermer"><CloseGlyph /></PlainButton>
            </WindowTools>
          </TitleBar>

          <Ribbon>
            {ribbon.map((group, i) => (
              <RibbonGroup key={i}>
                {group.map(([id, lines, w, off]) => (
                  <RibbonButton key={id} $w={w} disabled={off}>
                    {RibbonIcons[id]}
                    {lines.map((l) => <span key={l}>{l}</span>)}
                  </RibbonButton>
                ))}
              </RibbonGroup>
            ))}
            <Collapse aria-label="Replier"><Icon $s={10} viewBox="0 0 10 10"><path d="m2 6.500 3-3 3 3" stroke="#222" strokeWidth="1.500" /></Icon></Collapse>
          </Ribbon>
          <TabStrip>
            {ribbonTabs.map((t, i) => <RibbonTab key={t} $active={i === 0}>{t}</RibbonTab>)}
            <TopRuler viewBox="410 0 489 13" preserveAspectRatio="xMaxYMin meet">
              {range(12).map((i) => <rect key={i} x={427 + i * 42.1} y="6" width="1" height="1.500" opacity={[2, 6, 10].includes(i) ? 0 : 1} />)}
              <text x="504" y="9">200</text><text x="672" y="9">300</text><text x="841" y="9">400</text>
            </TopRuler>
          </TabStrip>

          <Workspace>
            <SideRuler viewBox="0 99 16 565">
              <path d="M0 99h16v565H0z" fill="#c9cacd" />
              <path d="M4 99h9v565H4z" fill="#e9ecdd" />
              <path d="M3 99h1v565H3zM14 99h2v565h-2z" fill="#55585e" />
              {range(14).map((i) => <rect key={i} x="8" y={105 + i * 42.1} width="1.500" height="1" opacity={[1, 5, 9, 13].includes(i) ? 0 : 1} />)}
              {sideMarks.map(([y, t]) => <text key={t} transform={`translate(11 ${y}) rotate(-90)`}>{t}</text>)}
            </SideRuler>
            <WorkColumn>
              <ViewRow>
                <TreePane>
                  <Grip><Knob /></Grip>
                  <PaneTabs>
                    <PaneTab aria-label="Arbre"><DrawGlyph /></PaneTab>
                    <PaneTab $active aria-label="Propriétés"><ListGlyph /></PaneTab>
                    <PaneMore aria-label="Suite"><Icon $s={10} viewBox="0 0 10 10"><path d="m4 2 3 3-3 3" strokeWidth="1.300" /></Icon></PaneMore>
                  </PaneTabs>
                  <FilterBox>
                    <Icon viewBox="0 0 14 14"><path d="M1.500 2h11v2L8.500 8v5l-3-1.500V8l-4-4z" fill="#e8eef2" /><path d="M2 3h10" stroke={blue} strokeWidth="2" /></Icon>
                    <input aria-label="Filtre" />
                  </FilterBox>
                  <Tree>
                    <li>
                      <TreeRow $pad={3}><DrawGlyph /><span>1350Z</span></TreeRow>
                      <ul>
                        <li>
                          <TreeRow $pad={19}>
                            <Icon $s={12} viewBox="0 0 14 14"><path d="M1 12.500V2h4l1 1.500h7v9z" fill="#f4f6f8" strokeWidth="1.300" /><path d="m4 11 3-6.500 3 6.500M5 9h4" stroke="#2c4a60" /></Icon>
                            <span>Annotations</span>
                          </TreeRow>
                        </li>
                        <li>
                          <TreeRow $pad={6}>
                            <Twist $open />
                            <Icon $s={13} viewBox="0 0 14 14"><path d="M.6 2h13v10H.6z" fill="#e0e2e6" /><path d="M7 8h4v3H7z" stroke="#fff" /></Icon>
                            <span>Feuille1</span>
                          </TreeRow>
                          <ViewList>
                            <li>
                              <TreeRow $pad={22}>
                                <Twist />
                                <TreeLabel><Icon $s={13} viewBox="0 0 14 14"><path d="M.6 2h13v10H.6z" fill="#e0e2e6" /><path d="M3 10V7h8" stroke="#fff" strokeWidth="1.500" /></Icon>Fond de plan1</TreeLabel>
                              </TreeRow>
                            </li>
                            {[1, 2, 3, 4, 5, 6, 7, 8].map((n) => (
                              <li key={n}>
                                <TreeRow $pad={22}>
                                  <Twist />
                                  <TreeLabel $selected={n === 6}>{[1, 7, 8].includes(n) ? <PartGlyph /> : <ViewsGlyph />}Vue de mise en plan{n}</TreeLabel>
                                </TreeRow>
                              </li>
                            ))}
                          </ViewList>
                        </li>
                      </ul>
                    </li>
                  </Tree>
                </TreePane>
                <Canvas>
                  <DrawingSheet />
                  <HeadsUp>
                    {headsUpIcons.map((ic, i) => <PlainButton key={i} aria-label={`Affichage ${i + 1}`}>{ic}</PlainButton>)}
                    <Caret $dim />
                    <PlainButton aria-label="Masquer"><Icon viewBox="0 0 14 14"><path d="M1 7q6-6 12 0-6 5-12 0zM7 1v3" fill="#eee" /><circle cx="7" cy="7" r="2" fill="#333" /></Icon></PlainButton>
                    <Caret $dim />
                    <PlainButton aria-label="Scène"><Icon viewBox="0 0 14 14"><circle cx="7" cy="7" r="5" fill="#dadde3" stroke="#c4c8cf" /><path d="M4 5q3-3 5 0" stroke="#fff" strokeWidth="2" /></Icon></PlainButton>
                    <DocButtons>
                      <PlainButton aria-label="Précédent"><Icon viewBox="0 0 14 14" style={{ stroke: g }}><path d="M3 3h8v8H3zM5 3v8M9.500 5 7.500 7l2 2" /></Icon></PlainButton>
                      <PlainButton aria-label="Suivant"><Icon viewBox="0 0 14 14" style={{ stroke: g }}><path d="M3 3h8v8H3zM9 3v8M5 5l2 2-2 2" /></Icon></PlainButton>
                      <PlainButton aria-label="Réduire le document"><MinGlyph /></PlainButton>
                      <PlainButton aria-label="Restaurer"><Icon viewBox="0 0 14 14" style={{ stroke: g }}><path d="M2 6h7v5H2zM5 6V2h8v5H9" strokeWidth="1.300" /></Icon></PlainButton>
                      <PlainButton aria-label="Fermer le document"><CloseGlyph /></PlainButton>
                    </DocButtons>
                  </HeadsUp>
                  <ScrollTrack><ScrollArrow $dir="up" /><ScrollArrow $dir="down" /></ScrollTrack>
                  <TaskPane>
                    {taskIcons.map(([n, ic], i) => <TaskButton key={n} aria-label={n} $active={i === 2}>{ic}</TaskButton>)}
                  </TaskPane>
                </Canvas>
              </ViewRow>
              <SheetTabs>
                <SheetTab $active>Feuille1</SheetTab>
                <SheetTab aria-label="Ajouter une feuille">
                  <Icon $s={10} viewBox="0 0 14 14"><path d="M4 4h9v8H6z" fill="#eef2f6" /><circle cx="4" cy="4" r="2.500" fill="#f0a63c" stroke="none" /></Icon>
                </SheetTab>
                <SheetScroll><ScrollArrow $dir="left" /><ScrollArrow $dir="right" /></SheetScroll>
              </SheetTabs>
            </WorkColumn>
          </Workspace>
          <StatusBar>
            <span>Sélectionnez un ou deux arêtes/sommets puis une position pour le texte.</span>
            <span>Sous-contrainte</span>
            <span>Edition: Vue de mise en plan6</span>
            <span>1 : 1</span>
            <UpCaret />
            <span>Personnalisé</span>
            <UpCaret />
            <Icon $s={10} viewBox="0 0 10 10"><path d="M1 1.500h8v7H1zM3 4h4M3 6h5" stroke="#333" /></Icon>
          </StatusBar>
        </CadWindow>

        <Copilot>
          <CopTitle>
            <Icon $s={8} viewBox="0 0 12 12" style={{ stroke: "#ddd", strokeWidth: 1.4 }}><circle cx="5" cy="7" r="3.800" /><path d="M3 5.500 5 7l2-1.500M5 7v3" /><circle cx="10" cy="2" r="1" /></Icon>
            MecAgent Copilot
            <CopWindowButtons>
              <PlainButton aria-label="Réduire"><Icon $s={10} viewBox="0 0 10 10" style={{ stroke: "#ddd" }}><path d="M2 5.500h7" /></Icon></PlainButton>
              <PlainButton aria-label="Agrandir"><Icon $s={10} viewBox="0 0 10 10" style={{ stroke: "#ddd" }}><rect x="2" y="2" width="6.500" height="6.500" rx="1" /></Icon></PlainButton>
              <PlainButton aria-label="Fermer"><Icon $s={10} viewBox="0 0 10 10" style={{ stroke: "#ddd" }}><path d="m2 2 6.500 6.500M8.500 2 2 8.500" /></Icon></PlainButton>
            </CopWindowButtons>
          </CopTitle>
          <CopHeader>
            <CopLogo>
              <Icon $s={13} viewBox="0 0 14 14" style={{ stroke: "#fff" }}><path d="M1.500 5.500 6 3l4.500 2.500v5L6 13l-4.500-2.500zM3.500 6.500 6 8l2.500-1.500M6 8v2.500" strokeWidth="1.200" strokeLinejoin="round" /><circle cx="12" cy="2.500" r="1.200" /></Icon>
              MecAgent
            </CopLogo>
            <CopButton aria-label="Favoris"><GearDots s={12} star /></CopButton>
            <CopButton $ml={10}><GearDots s={13} />Public Automations</CopButton>
            <CopButton $ml={12} disabled><MessageSquarePlus size={10} strokeWidth={2} />New Chat</CopButton>
            <BareButton $ml={12} aria-label="Menu"><Menu size={11} /></BareButton>
            <BareButton $ml={10} aria-label="Paramètres"><Settings size={11} /></BareButton>
          </CopHeader>
          <CopStatus>
            <OnlineDot />
            <Icon $s={12} viewBox="0 0 14 14" style={{ stroke: "#d39a1c", strokeWidth: 1.4 }}><path d="M3 12q-3-2 0-4.500Q1 3 5.500 2.500 9 2 9.500 5q4 .5 3.500 4.500L12 12l-3-1.500-2 1z" strokeLinejoin="round" /></Icon>
            <span>No part selected</span>
            <CopButton>
              <Icon $s={10} viewBox="0 0 10 10"><path d="M4 1h5v5H6z" fill="#d83028" stroke="none" /><path d="M1 2v2M1 6h3M1 9h2M5 8h1M8 7v2M5 3l2 2" stroke="#ddd" strokeWidth="1.200" /></Icon>
              Reconnect SolidWorks
            </CopButton>
          </CopStatus>

          <Card>
            <CardTabs>
              <CardTab $active>
                <Icon $s={10} viewBox="0 0 10 10"><path d="M1 3q1-3 4-1l4 4v2l-2 1-5-3z" fill="#f0cd3a" stroke="#c79d1d" strokeWidth=".6" /></Icon>
                Active Part
              </CardTab>
              <CardTab>
                <Icon $s={10} viewBox="0 0 10 10" style={{ stroke: "#bbb" }}><circle cx="6.700" cy="3.300" r="2.300" /><rect x="1" y="5" width="4" height="4" rx="1.200" /><path d="M3.500 3.500 2 5M8 5.500 6.500 8H5" /></Icon>
                Batch Drawing Creation
              </CardTab>
            </CardTabs>
            <CardBody>
              <GeneratorHead>
                <GeneratorIcon />
                <div><h2>Drawing Generator</h2><p><GrayDot />No part active</p></div>
              </GeneratorHead>
              <TemplateRow>
                <FieldLabel htmlFor="template">
                  <Icon $s={9} viewBox="0 0 12 12" style={{ stroke: "#999" }}><path d="M1 4 3 2h8v8H1zM1 4h7v6M8 4l3-2M3.500 7h2" /></Icon>
                  Drawing Template
                </FieldLabel>
                <input id="template" defaultValue="SolidWorks Default (A3)" />
                <UploadButton aria-label="Importer un modèle"><Upload size={10} /></UploadButton>
              </TemplateRow>
              <Hint $indent>Supported format: DRWDOT</Hint>
              <OptionRow>
                <FieldLabel htmlFor="standard"><FileDigit size={9} color="#999" />International Standard</FieldLabel>
                <SelectBox $w={75}><select id="standard"><option>ISO</option></select><ChevronDown size={10} /></SelectBox>
              </OptionRow>
              <OptionRow>
                <FieldLabel htmlFor="units"><Icon $s={9} viewBox="0 0 12 12" style={{ stroke: "#aaa" }}><path d="m1 3 2-2 8 8-2 2zM4 4 3 5M6 6 5 7M8 8 7 9" /></Icon>Units</FieldLabel>
                <SelectBox $w={75}><select id="units"><option>mm</option></select><ChevronDown size={10} /></SelectBox>
              </OptionRow>
              <OptionRow>
                <FieldLabel htmlFor="size"><FileDigit size={9} color="#999" />Sheet Size</FieldLabel>
                <SelectBox $w={107}><select id="size"><option>A3</option></select><ChevronDown size={10} /></SelectBox>
              </OptionRow>
              <Hint>No custom template: selected sheet size is used to resolve SolidWorks default template.</Hint>
              <StopButton><Square size={10} />Stop</StopButton>
            </CardBody>
          </Card>

          <ChatArea>
            <ModeTab><GeneratorIcon s={14} solid />Drawing Generator</ModeTab>
            <ChatBox>
              <textarea aria-label="Chat" disabled placeholder="Chat is disabled in Drawing Generator mode" />
              <ChatNotice><Info size={11} />Chat is disabled in Drawing Generator mode</ChatNotice>
              <ModeBar>
                <ModeButton $w={35} aria-label="Automatisation">
                  <Icon $s={14} viewBox="0 0 14 14" style={{ stroke: "#aaa" }}><circle cx="7" cy="7" r="2.500" strokeWidth="1.800" /><path d="M4 11.500A5.500 5.500 0 0 1 2 5M10 2.500A5.500 5.500 0 0 1 12 9M.5 6.500 2 4.500l2 1M13.500 7.500l-1.500 2-2-1" /></Icon>
                </ModeButton>
                <ModeButton $w={36} aria-label="Assistant">
                  <Icon $s={14} viewBox="0 0 14 14" style={{ stroke: "#aaa" }}><circle cx="7" cy="5" r="3.500" /><circle cx="7" cy="5" r="1.300" /><path d="M1 10.500q3-1.500 6 .5 3-2 6-.5l-1 1.500H2z" fill="#888" /></Icon>
                </ModeButton>
                <ModeButton $w={36} $active aria-label="Drawing Generator"><GeneratorIcon s={14} solid /></ModeButton>
                <ModeButton $w={49} aria-label="Laboratoire"><FlaskConical size={13} /><ChevronDown size={9} /></ModeButton>
              </ModeBar>
            </ChatBox>
          </ChatArea>

          <Pointer viewBox="0 0 9 14"><path d="M.5.5v10.500l2.500-2 2 4.500 1.500-.8-2-4.200h3.500z" fill="#fff" stroke="#222" strokeWidth=".6" /></Pointer>
        </Copilot>
      </Desktop>
    </>
  );
}
